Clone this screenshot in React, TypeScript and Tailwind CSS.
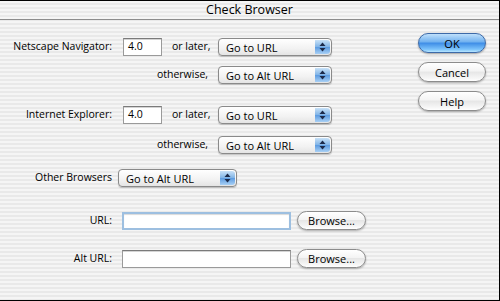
import React from 'react';

const font = { fontFamily: '"Open Sans", "DejaVu Sans", sans-serif' };

function Arrows(): JSX.Element {
  return (
    <svg width="7" height="10" viewBox="0 0 7 10">
      <path d="M3.5 0.5 L6.5 4 L0.5 4 Z" fill="#1c2a4a" />
      <path d="M3.5 9.5 L6.5 6 L0.5 6 Z" fill="#1c2a4a" />
    </svg>
  );
}

function PopUp({ label, width }: { label: string; width: string }): JSX.Element {
  return (
    <div
      className={`flex h-[18px] ${width} items-center rounded-[4px] border border-[#8a8a8a] bg-[linear-gradient(to_bottom,#ffffff,#f2f2f2_60%,#e4e4e4)] shadow-[0_1px_1px_rgba(0,0,0,0.2)]`}
    >
      <span className="flex-1 whitespace-nowrap pl-[7px] text-[11px] leading-none text-black">{label}</span>
      <span className="mr-[1px] flex h-[14px] w-[15px] items-center justify-center rounded-r-[3px] bg-[linear-gradient(to_bottom,#c9e2f8,#7fb3e6_50%,#5b9ae0_51%,#a8d0f5)]">
        <Arrows />
      </span>
    </div>
  );
}

function TextBox({ value, width, focused }: { value?: string; width: string; focused?: boolean }): JSX.Element {
  return (
    <div
      className={`flex h-[18px] ${width} items-center bg-white pl-[4px] text-[10.5px] ${
        focused
          ? 'border-2 border-[#9dbfe0] shadow-[inset_0_1px_1px_rgba(0,0,0,0.15)]'
          : 'border border-[#9a9a9a] border-t-[#7a7a7a] shadow-[inset_0_1px_0_#d4d4d4]'
      }`}
    >
      {value}
    </div>
  );
}

function AquaButton({ label, primary, size }: { label: string; primary?: boolean; size: string }): JSX.Element {
  return (
    <div
      className={`flex ${size} items-center justify-center rounded-full text-[11px] leading-none text-black ${
        primary
          ? 'border border-[#3d6aa8] bg-[linear-gradient(to_bottom,#bfe0fb,#6fb0ef_45%,#3d8ce6_50%,#7cc3fb_85%,#b8e6ff)] shadow-[0_1px_2px_rgba(0,0,0,0.35)]'
          : 'border border-[#8c8c8c] bg-[linear-gradient(to_bottom,#ffffff,#f4f4f4_45%,#e6e6e6_50%,#f6f6f6_85%,#ffffff)] shadow-[0_1px_2px_rgba(0,0,0,0.3)]'
      }`}
    >
      {label}
    </div>
  );
}

export default function App(): JSX.Element {
  return (
    <div
      style={font}
      className="flex h-[301px] w-[500px] flex-col overflow-hidden whitespace-nowrap border-t border-r border-b border-black bg-[repeating-linear-gradient(to_bottom,#f5f5f5_0px,#f5f5f5_2px,#e9e9e9_2px,#e9e9e9_4px)] text-[10.5px] text-black"
    >
      <div className="flex h-[19px] shrink-0 items-center justify-center border-b border-[#8c8c8c] text-[12.5px]">
        Check Browser
      </div>

      <div className="flex flex-1">
        <div className="flex w-[400px] flex-col">
          <div className="mt-[18px] flex h-[18px] items-center">
            <span className="w-[112px] text-right">Netscape Navigator:</span>
            <span className="ml-[11px]"><TextBox value="4.0" width="w-[39px]" /></span>
            <span className="ml-[10px] w-[36px]">or later,</span>
            <span className="ml-[10px]"><PopUp label="Go to URL" width="w-[114px]" /></span>
          </div>
          <div className="mt-[10px] flex h-[18px] items-center">
            <span className="w-[208px] text-right">otherwise,</span>
            <span className="ml-[10px]"><PopUp label="Go to Alt URL" width="w-[114px]" /></span>
          </div>

          <div className="mt-[22px] flex h-[18px] items-center">
            <span className="w-[112px] text-right">Internet Explorer:</span>
            <span className="ml-[11px]"><TextBox value="4.0" width="w-[39px]" /></span>
            <span className="ml-[10px] w-[36px]">or later,</span>
            <span className="ml-[10px]"><PopUp label="Go to URL" width="w-[114px]" /></span>
          </div>
          <div className="mt-[12px] flex h-[18px] items-center">
            <span className="w-[208px] text-right">otherwise,</span>
            <span className="ml-[10px]"><PopUp label="Go to Alt URL" width="w-[114px]" /></span>
          </div>

          <div className="mt-[15px] flex h-[18px] items-center">
            <span className="w-[112px] text-right">Other Browsers</span>
            <span className="ml-[6px]"><PopUp label="Go to Alt URL" width="w-[119px]" /></span>
          </div>

          <div className="mt-[24px] flex h-[19px] items-center">
            <span className="w-[112px] text-right">URL:</span>
            <span className="ml-[10px]"><TextBox width="w-[169px]" focused /></span>
            <span className="ml-[6px]"><AquaButton label="Browse..." size="h-[19px] w-[69px]" /></span>
          </div>
          <div className="mt-[19px] flex h-[19px] items-center">
            <span className="w-[112px] text-right">Alt URL:</span>
            <span className="ml-[10px]"><TextBox width="w-[169px]" /></span>
            <span className="ml-[6px]"><AquaButton label="Browse..." size="h-[19px] w-[69px]" /></span>
          </div>
        </div>

        <div className="ml-[18px] flex flex-col gap-[9px] pt-[13px]">
          <AquaButton label="OK" primary size="h-[20px] w-[68px]" />
          <AquaButton label="Cancel" size="h-[20px] w-[68px]" />
          <AquaButton label="Help" size="h-[20px] w-[68px]" />
        </div>
      </div>
    </div>
  );
}
